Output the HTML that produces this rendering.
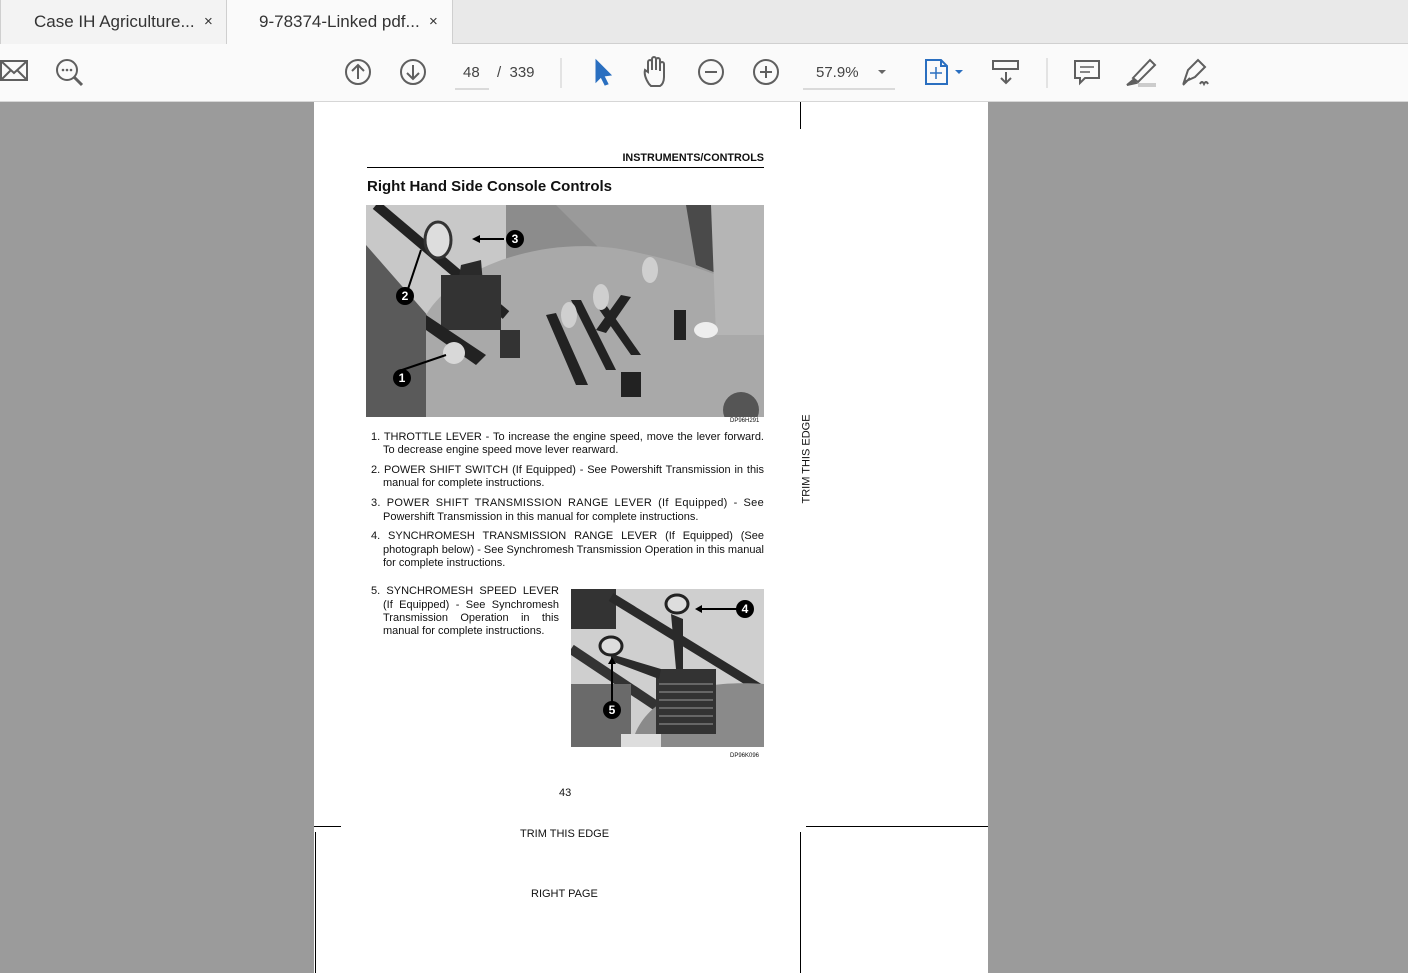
<!DOCTYPE html>
<html><head><meta charset="utf-8">
<style>
*{margin:0;padding:0;box-sizing:border-box}
body{width:1408px;height:973px;overflow:hidden;background:#9b9b9b;font-family:"Liberation Sans",Arial,sans-serif;position:relative}
.abs{position:absolute}
#tabs{left:0;top:0;width:1408px;height:44px;background:#e9e9e9;border-bottom:1px solid #d0d0d0}
.tab{top:0;height:44px;font-size:17px;color:#333;line-height:44px}
#tb{left:0;top:44px;width:1408px;height:58px;background:#fafafa;border-bottom:1px solid #d6d6d6}
#page{left:314px;top:102px;width:674px;height:871px;background:#fff}
.t{position:absolute;font-size:11px;color:#111;white-space:nowrap;line-height:13px}
.j{text-align:justify;text-align-last:justify;white-space:normal}
.ln{position:absolute;background:#000}
</style></head><body>
<div id="tabs" class="abs">
 <div class="abs" style="left:0;top:0;width:227px;height:44px;background:#f3f3f3;border-right:1px solid #cfcfcf;border-left:1px solid #cfcfcf"></div>
 <div class="abs" style="left:227px;top:0;width:226px;height:45px;background:#fafafa;border-right:1px solid #cfcfcf"></div>
 <div class="abs tab" style="left:34px">Case IH Agriculture...</div>
 <div class="abs tab" style="left:204px;font-size:15px">×</div>
 <div class="abs tab" style="left:259px">9-78374-Linked pdf...</div>
 <div class="abs tab" style="left:429px;font-size:15px">×</div>
</div>
<div id="tb" class="abs">
 <svg class="abs" style="left:0;top:0" width="1408" height="58" fill="none" stroke="#5f5f5f" stroke-width="2">
  <rect x="1" y="17" width="26" height="19"/><path d="M1 17 L14 29 L27 17 M1 36 L11 26 M27 36 L17 26"/>
  <circle cx="67" cy="26" r="10"/><path d="M74 33 L82 41" stroke-width="3"/>
  <g fill="#5f5f5f" stroke="none"><circle cx="63" cy="26" r="1.3"/><circle cx="67" cy="26" r="1.3"/><circle cx="71" cy="26" r="1.3"/></g>
  <circle cx="358" cy="28" r="12"/><path d="M358 35 V21 M352 27 L358 21 L364 27"/>
  <circle cx="413" cy="28" r="12"/><path d="M413 21 V35 M407 29 L413 35 L419 29"/>
  <path d="M455 45 H489" stroke="#bbb" stroke-width="1"/>
  <path d="M561 14 V44" stroke="#ccc" stroke-width="1"/>
  <path d="M596 16 L596 38 L601 33 L605 41 L608 40 L604 32 L611 31 Z" fill="#2a6fc0" stroke="#2a6fc0" stroke-width="1"/>
  <path d="M649 40 C645 34 644 30 645 26 L648 28 V18 a2 2 0 0 1 4 0 V26 V15 a2 2 0 0 1 4 0 V26 V16 a2 2 0 0 1 4 0 V27 V20 a2 2 0 0 1 4 0 V33 C664 38 662 41 660 42 H651 Z"/>
  <circle cx="711" cy="28" r="12"/><path d="M705 28 H717"/>
  <circle cx="766" cy="28" r="12"/><path d="M760 28 H772 M766 22 V34"/>
  <path d="M803 45 H895" stroke="#bbb" stroke-width="1"/>
  <path d="M878 26 L882 30 L886 26 Z" fill="#666" stroke="none"/>
  <path d="M926 16 H941 L947 22 V40 H926 Z" stroke="#2a6fc0"/><path d="M941 16 V22 H947" stroke="#2a6fc0"/>
  <path d="M936 23 V35 M930 29 H942" stroke="#2a6fc0" stroke-width="1.5"/>
  <path d="M955 26 L959 30 L963 26 Z" fill="#2a6fc0" stroke="none"/>
  <rect x="993" y="17" width="25" height="8"/><path d="M1006 28 V39 M1001 34 L1006 39 L1011 34"/>
  <path d="M1047 14 V44" stroke="#ccc" stroke-width="1"/>
  <path d="M1075 17 H1099 V34 H1085 L1080 39 V34 H1075 Z"/><path d="M1080 23 H1094 M1080 28 H1090" stroke-width="1.5"/>
  <path d="M1133 34 L1150 16 L1155 21 L1138 38 Z"/><path d="M1127 41 L1133 36 L1136 39 Z" fill="#5f5f5f"/><path d="M1138 41 H1156" stroke="#ccc" stroke-width="4"/>
  <path d="M1184 38 L1188 26 L1198 16 L1205 23 L1195 33 Z M1183 41 L1190 34"/><path d="M1200 40 q2 -4 4 0 q2 -4 4 0"/>
 </svg>
 <div class="abs" style="left:463px;top:20px;font-size:15px;color:#444">48</div>
 <div class="abs" style="left:497px;top:20px;font-size:15px;color:#444">/&nbsp; 339</div>
 <div class="abs" style="left:816px;top:20px;font-size:15px;color:#444">57.9%</div>
</div>

<div id="page" class="abs"></div>
<div class="ln" style="left:800px;top:102px;width:1px;height:27px"></div>
<div class="ln" style="left:314px;top:826px;width:27px;height:1px"></div>
<div class="ln" style="left:806px;top:826px;width:182px;height:1px"></div>
<div class="ln" style="left:315px;top:832px;width:1px;height:141px"></div>
<div class="ln" style="left:800px;top:832px;width:1px;height:141px"></div>

<div class="t" style="left:564px;width:200px;text-align:right;top:152px;font-weight:bold;font-size:10.8px">INSTRUMENTS/CONTROLS</div>
<div class="ln" style="left:367px;top:167px;width:397px;height:1px"></div>
<div class="t" style="left:367px;top:179px;font-weight:bold;font-size:15px;line-height:16px">Right Hand Side Console Controls</div>

<svg class="abs" style="left:366px;top:205px" width="398" height="212">
 <rect width="398" height="212" fill="#8c8c8c"/>
 <rect x="0" y="0" width="140" height="110" fill="#c8c8c8"/>
 <path d="M0 40 L70 120 L60 212 L0 212 Z" fill="#5a5a5a"/>
 <path d="M190 0 H398 V120 L250 60 Z" fill="#9a9a9a"/>
 <path d="M320 0 H380 V80 L330 60 Z" fill="#4a4a4a"/>
 <path d="M60 110 C90 60 180 30 260 45 C330 60 398 80 398 110 V212 H60 Z" fill="#a9a9a9"/>
 <path d="M345 0 H398 V130 H350 Z" fill="#b5b5b5"/>
 <path d="M10 0 L140 110" stroke="#222" stroke-width="10"/>
 <path d="M85 120 L95 60 L115 55 L120 115 Z" fill="#2a2a2a"/>
 <rect x="75" y="70" width="60" height="55" fill="#333"/>
 <ellipse cx="72" cy="35" rx="13" ry="18" fill="#ddd" stroke="#333" stroke-width="3"/>
 <path d="M60 110 L120 150 L110 160 L60 125 Z" fill="#222"/>
 <circle cx="88" cy="148" r="11" fill="#d8d8d8"/>
 <rect x="134" y="125" width="20" height="28" fill="#333"/>
 <path d="M180 110 L210 180 L222 180 L190 108 Z M205 95 L240 165 L250 165 L215 95 Z M230 100 L265 150 L275 150 L240 100 Z M255 90 L230 125 L240 128 L265 92 Z" fill="#222"/>
 <ellipse cx="203" cy="110" rx="8" ry="13" fill="#cfcfcf"/><ellipse cx="235" cy="92" rx="8" ry="13" fill="#cfcfcf"/><ellipse cx="284" cy="65" rx="8" ry="13" fill="#cfcfcf"/>
 <rect x="255" y="167" width="20" height="25" fill="#222"/>
 <rect x="308" y="105" width="12" height="30" fill="#222"/><ellipse cx="340" cy="125" rx="12" ry="8" fill="#eee"/>
 <circle cx="375" cy="205" r="18" fill="#555"/>
 <g stroke="#000" stroke-width="2"><path d="M138 34 H110 M40 90 L55 45 M36 165 L80 150"/></g>
 <g fill="#000"><path d="M106 34 L114 30 L114 38 Z"/><circle cx="149" cy="34" r="9"/><circle cx="39" cy="91" r="9"/><circle cx="36" cy="173" r="9"/></g>
 <g fill="#fff" font-size="12" font-weight="bold" font-family="Liberation Sans" text-anchor="middle"><text x="149" y="38">3</text><text x="39" y="95">2</text><text x="36" y="177">1</text></g>
</svg>
<div class="t" style="left:730px;top:418px;font-size:6px;line-height:7px">DP96H291</div>

<div class="t j" style="left:371px;width:393px;top:431px">1. THROTTLE LEVER - To increase the engine speed, move the lever forward.</div>
<div class="t" style="left:383px;top:444px">To decrease engine speed move lever rearward.</div>
<div class="t j" style="left:371px;width:393px;top:464px">2. POWER SHIFT SWITCH (If Equipped) - See Powershift Transmission in this</div>
<div class="t" style="left:383px;top:477px">manual for complete instructions.</div>
<div class="t j" style="left:371px;width:393px;top:497px;letter-spacing:0.3px">3. POWER SHIFT TRANSMISSION RANGE LEVER (If Equipped) - See</div>
<div class="t" style="left:383px;top:511px">Powershift Transmission in this manual for complete instructions.</div>
<div class="t j" style="left:371px;width:393px;top:530px">4. SYNCHROMESH TRANSMISSION RANGE LEVER (If Equipped) (See</div>
<div class="t j" style="left:383px;width:381px;top:544px">photograph below) - See Synchromesh Transmission Operation in this manual</div>
<div class="t" style="left:383px;top:557px">for complete instructions.</div>
<div class="t j" style="left:371px;width:188px;top:585px">5. SYNCHROMESH SPEED LEVER</div>
<div class="t j" style="left:383px;width:176px;top:599px">(If Equipped) - See Synchromesh</div>
<div class="t j" style="left:383px;width:176px;top:612px">Transmission Operation in this</div>
<div class="t" style="left:383px;top:625px">manual for complete instructions.</div>

<svg class="abs" style="left:571px;top:589px" width="193" height="158">
 <rect width="193" height="158" fill="#cfcfcf"/>
 <path d="M0 0 H45 V40 H0 Z" fill="#333"/>
 <path d="M40 8 L190 100" stroke="#2a2a2a" stroke-width="9"/>
 <path d="M0 60 L90 120" stroke="#333" stroke-width="10"/>
 <path d="M0 95 H60 V158 H0 Z" fill="#6a6a6a"/>
 <path d="M60 158 C70 110 120 90 193 95 V158 Z" fill="#8a8a8a"/>
 <rect x="85" y="80" width="60" height="65" fill="#333"/>
 <g stroke="#777" stroke-width="1.5"><path d="M88 95 H142 M88 103 H142 M88 111 H142 M88 119 H142 M88 127 H142 M88 135 H142"/></g>
 <path d="M100 25 L112 30 L112 80 L105 80 Z M40 65 L90 80 L88 90 L40 72 Z" fill="#2a2a2a"/>
 <ellipse cx="106" cy="15" rx="11" ry="9" fill="#ddd" stroke="#222" stroke-width="3"/>
 <ellipse cx="40" cy="57" rx="11" ry="9" fill="#ddd" stroke="#222" stroke-width="3"/>
 <rect x="50" y="145" width="40" height="13" fill="#ddd"/>
 <g stroke="#000" stroke-width="2"><path d="M128 20 H166 M41 72 V113"/></g>
 <g fill="#000"><path d="M124 20 L131 16 L131 24 Z M41 68 L37 75 L45 75 Z"/><circle cx="174" cy="20" r="9"/><circle cx="41" cy="121" r="9"/></g>
 <g fill="#fff" font-size="12" font-weight="bold" font-family="Liberation Sans" text-anchor="middle"><text x="174" y="24">4</text><text x="41" y="125">5</text></g>
</svg>
<div class="t" style="left:730px;top:753px;font-size:6px;line-height:7px">DP96K096</div>

<div class="t" style="left:559px;top:787px">43</div>
<div class="t" style="left:520px;top:828px">TRIM THIS EDGE</div>
<div class="t" style="left:531px;top:888px">RIGHT PAGE</div>
<div class="t" style="left:763px;top:453px;transform:rotate(-90deg);transform-origin:center;width:88px;text-align:center">TRIM THIS EDGE</div>
</body></html>
